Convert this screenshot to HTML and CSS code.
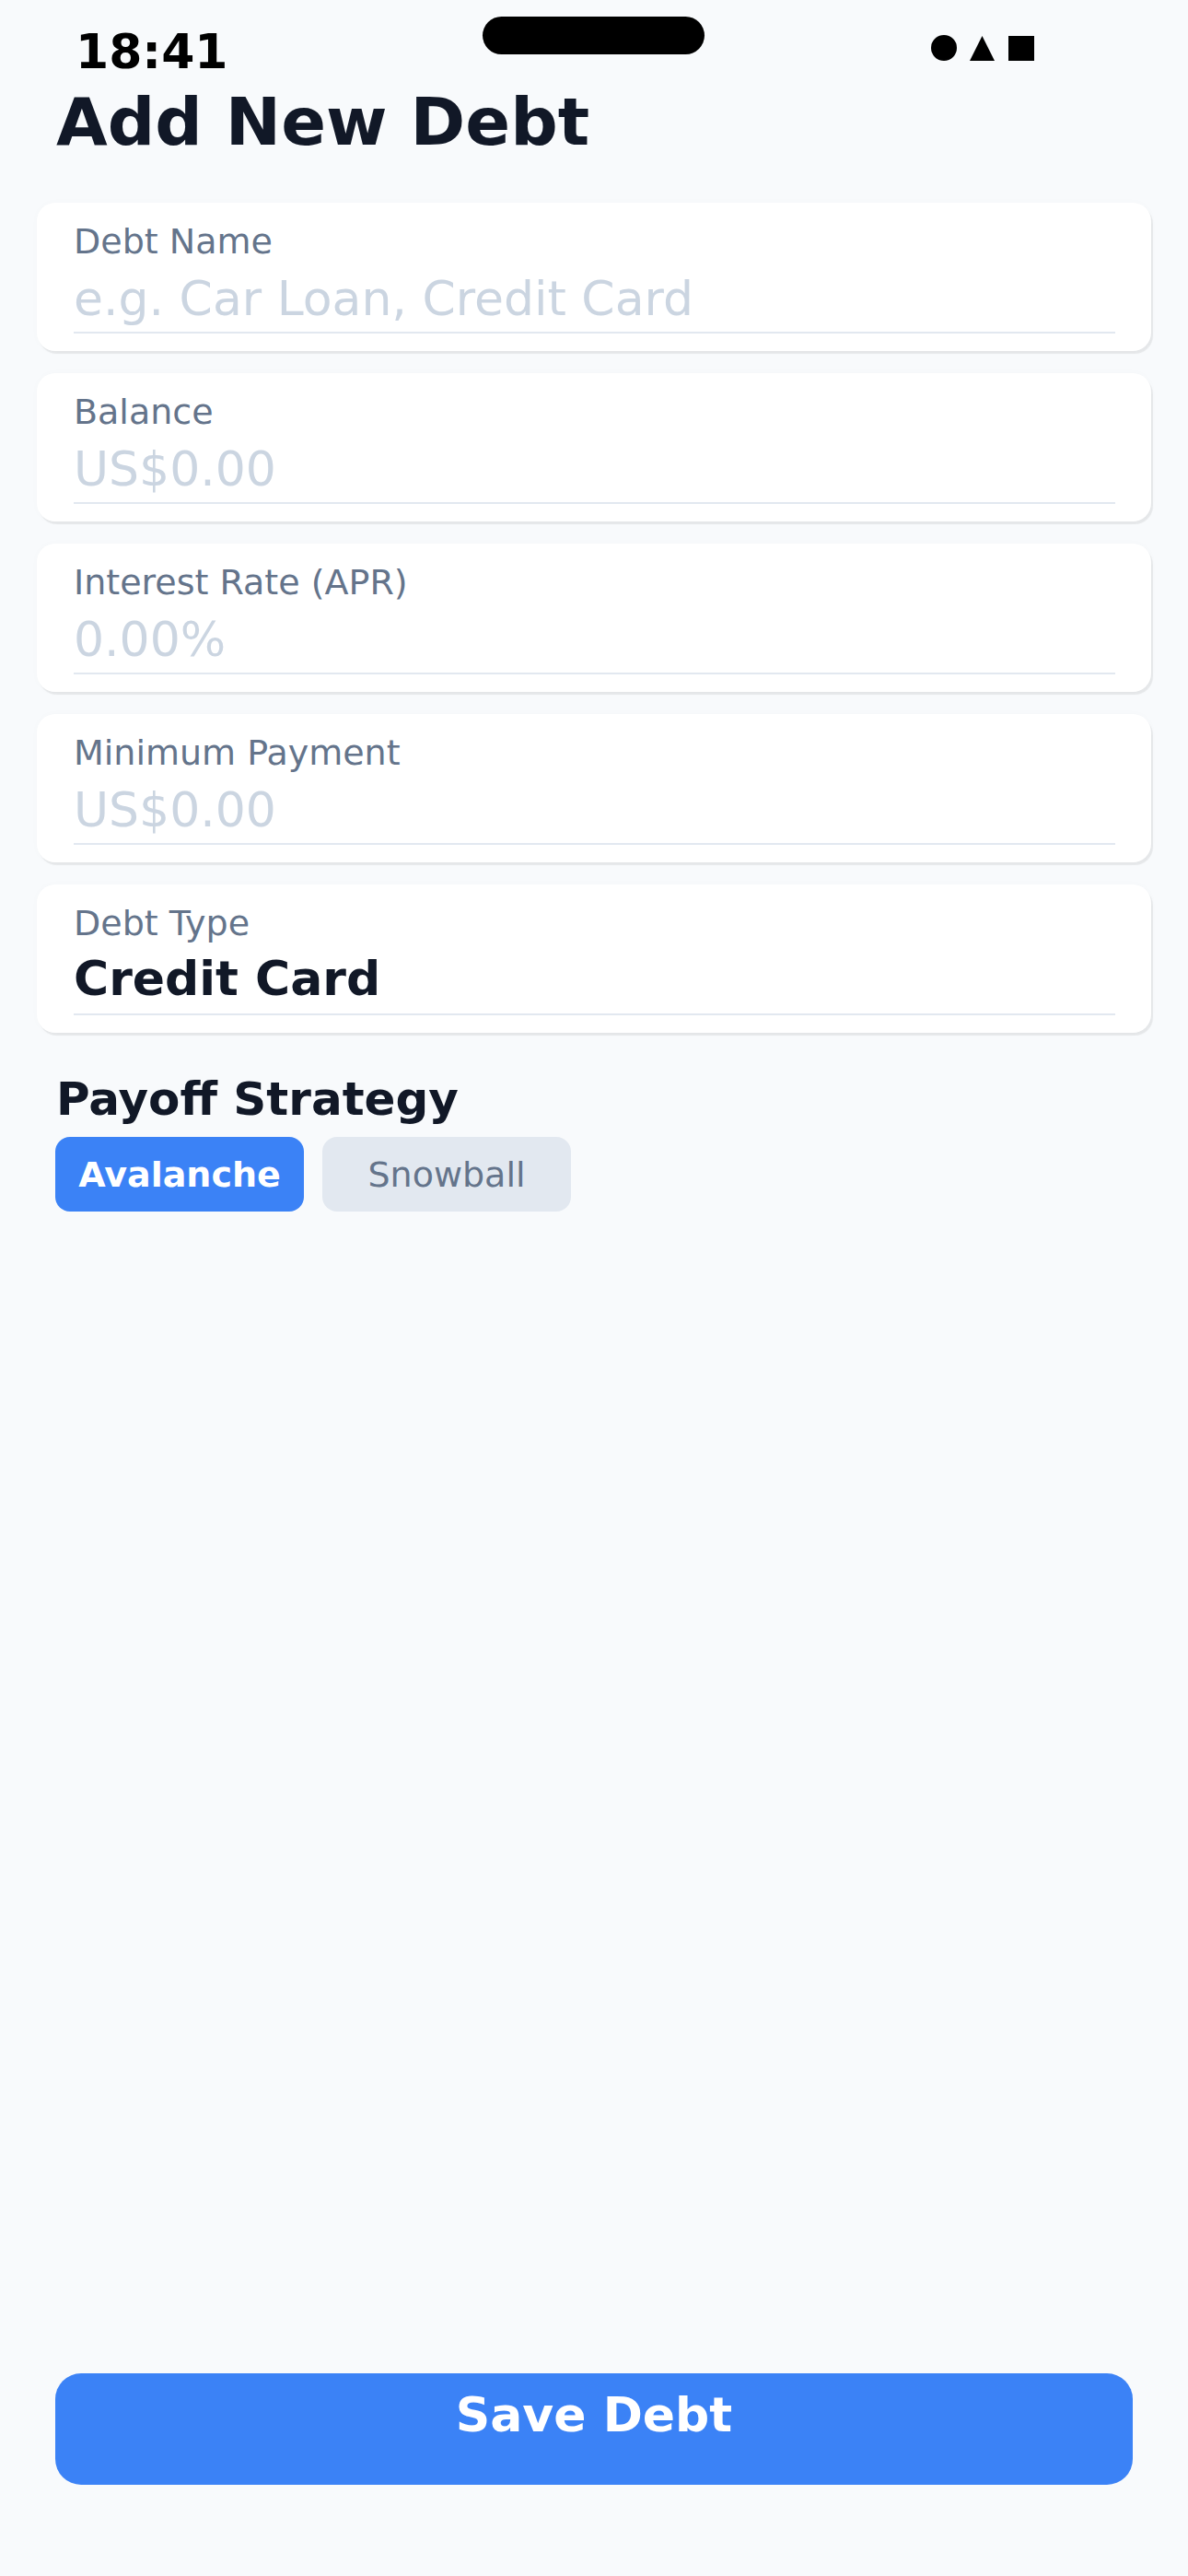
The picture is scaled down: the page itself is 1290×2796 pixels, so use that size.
FILE: index.html
```html
<!DOCTYPE html>
<html lang="en">
<head>
    <meta charset="UTF-8">
    <meta name="viewport" content="width=device-width, initial-scale=1.0">
    <title>Add New Debt</title>
    <link rel="stylesheet" href="styles.css">
</head>
<body>
    <div class="screen">
        <div class="status-bar">
            <span class="time">18:41</span>
            <div class="island"></div>
            <svg class="status-icons" width="112" height="28" viewBox="0 0 112 28">
                <circle cx="14" cy="14" r="14" fill="#000"/>
                <polygon points="42,28 69,28 55.5,1" fill="#000"/>
                <rect x="84" y="1" width="28" height="27" fill="#000"/>
            </svg>
        </div>

        <h1 class="title">Add New Debt</h1>

        <div class="fields">
            <div class="field">
                <label class="field-label">Debt Name</label>
                <input class="field-input" type="text" placeholder="e.g. Car Loan, Credit Card">
            </div>
            <div class="field">
                <label class="field-label">Balance</label>
                <input class="field-input" type="text" placeholder="US$0.00">
            </div>
            <div class="field">
                <label class="field-label">Interest Rate (APR)</label>
                <input class="field-input" type="text" placeholder="0.00%">
            </div>
            <div class="field">
                <label class="field-label">Minimum Payment</label>
                <input class="field-input" type="text" placeholder="US$0.00">
            </div>
            <div class="field">
                <label class="field-label">Debt Type</label>
                <div class="field-value">Credit Card</div>
            </div>
        </div>

        <h2 class="section-title">Payoff Strategy</h2>
        <div class="strategy">
            <button class="chip active">Avalanche</button>
            <button class="chip">Snowball</button>
        </div>

        <div class="save">Save Debt</div>
    </div>
</body>
</html>
```

FILE: styles.css
```css
html, body {
    margin: 0;
    padding: 0;
}
body {
    font-family: "DejaVu Sans", "Liberation Sans", sans-serif;
    background-color: #f8fafc;
    color: #0f172a;
}
.screen {
    display: flex;
    flex-direction: column;
    min-height: 100vh;
    box-sizing: border-box;
    padding-bottom: 99px;
}

/* status bar */
.status-bar {
    display: flex;
    justify-content: space-between;
    align-items: flex-start;
    height: 90px;
    box-sizing: border-box;
    padding: 18px 167px 0 82px;
}
.time {
    font-size: 52px;
    font-weight: bold;
    color: #000;
    line-height: 60px;
    margin-top: 8px;
    width: 200px;
}
.island {
    width: 241px;
    height: 41px;
    background-color: #000;
    border-radius: 21px;
    margin-left: -4px;
}
.status-icons {
    display: block;
    margin-top: 20px;
}

.title {
    margin: 0 0 46px;
    padding-left: 61px;
    font-size: 72px;
    line-height: 84px;
    font-weight: bold;
    color: #111827;
}

/* form cards */
.fields {
    display: flex;
    flex-direction: column;
    gap: 24px;
    padding: 0 40px;
}
.field {
    display: flex;
    flex-direction: column;
    background-color: #fff;
    border-radius: 20px;
    padding: 20px 39px 19px 40px;
    box-shadow: 2px 3px 1px rgba(0, 0, 0, 0.07), 0 0 8px rgba(0, 0, 0, 0.02);
}
.field-label {
    font-size: 38px;
    line-height: 44px;
    color: #64748b;
    margin-bottom: 10px;
}
.field-input {
    font-family: inherit;
    font-size: 52px;
    height: 60px;
    line-height: 60px;
    padding: 0 0 6px;
    margin: 0;
    border: none;
    border-bottom: 2px solid #e2e8f0;
    background: transparent;
    color: #111827;
    outline: none;
    width: 100%;
}
.field-input::placeholder {
    color: #cbd5e1;
}
.field-value {
    font-size: 52px;
    font-weight: bold;
    line-height: 57px;
    padding: 0 0 9px;
    border-bottom: 2px solid #e2e8f0;
    color: #111827;
}

/* strategy */
.section-title {
    margin: 43px 0 12px;
    padding-left: 61px;
    font-size: 50px;
    line-height: 58px;
    font-weight: bold;
    color: #111827;
}
.strategy {
    display: flex;
    gap: 20px;
    padding-left: 60px;
}
.chip {
    width: 270px;
    height: 81px;
    border: none;
    border-radius: 16px;
    font-family: inherit;
    font-size: 38px;
    background-color: #e2e8f0;
    color: #64748b;
    padding: 0;
}
.chip.active {
    background-color: #3b82f6;
    color: #fff;
    font-weight: bold;
}

.save {
    margin: auto 60px 0;
    padding: 15px 0 46px;
    border-radius: 28px;
    background-color: #3b82f6;
    color: #fff;
    font-size: 52px;
    line-height: 60px;
    font-weight: bold;
    text-align: center;
    cursor: pointer;
}
```
